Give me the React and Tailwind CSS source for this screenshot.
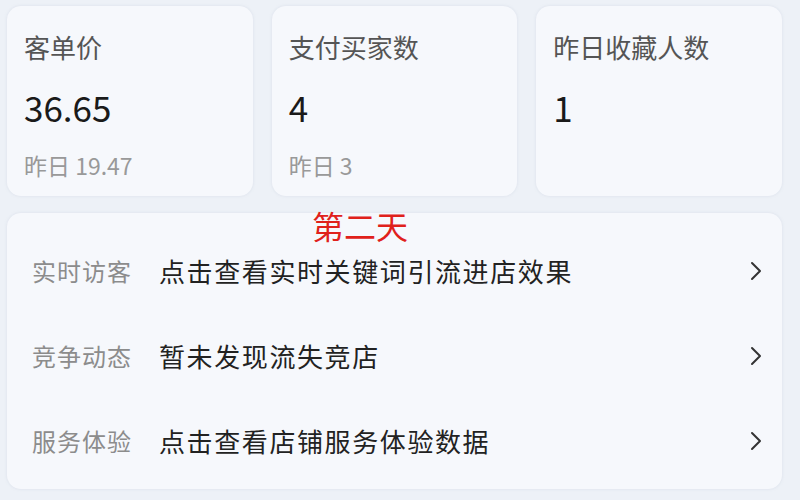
import React from 'react';

const stats = [
  { title: '客单价', value: '36.65', prev: '昨日 19.47' },
  { title: '支付买家数', value: '4', prev: '昨日 3' },
  { title: '昨日收藏人数', value: '1', prev: null },
];

const rows = [
  { label: '实时访客', text: '点击查看实时关键词引流进店效果' },
  { label: '竞争动态', text: '暂未发现流失竞店' },
  { label: '服务体验', text: '点击查看店铺服务体验数据' },
];

const Chevron = () => (
  <svg width="12" height="20" viewBox="0 0 12 20" fill="none" stroke="#333" strokeWidth="2" strokeLinecap="round" strokeLinejoin="round">
    <path d="M2 2l8 8-8 8" />
  </svg>
);

const App = () => {
  return (
    <div
      className="w-[800px] h-[500px] bg-[#edf1f7] overflow-hidden"
      style={{ fontFamily: '"Noto Sans CJK SC", "Noto Sans", sans-serif' }}
    >
      {/* stat cards */}
      <div className="flex gap-[19px] pl-[7px] pr-[18px] pt-[6px]">
        {stats.map((s) => (
          <div key={s.title} className="flex-1 h-[190px] rounded-[14px] bg-[#f6f8fc] shadow-[0_0_3px_rgba(180,190,210,0.35)] pl-[17px] pt-[26px]">
            <div className="text-[26px] leading-[30px] text-[#555]">{s.title}</div>
            <div className="mt-[25px] text-[35px] leading-[40px] text-[#1a1a1a]">{s.value}</div>
            {s.prev && <div className="mt-[23px] text-[23px] leading-[30px] text-[#999]">{s.prev}</div>}
          </div>
        ))}
      </div>

      {/* list card */}
      <div className="ml-[7px] mr-[18px] mt-[17px] h-[276px] rounded-[14px] bg-[#f6f8fc] shadow-[0_0_3px_rgba(180,190,210,0.35)] relative pt-[15px]">
        <div className="absolute left-[305px] top-[-6px] text-[32px] leading-[36px] text-[#e0211b]">第二天</div>
        {rows.map((r) => (
          <div key={r.label} className="flex items-center h-[85px] pl-[25px] pr-[20px]">
            <div className="w-[127px] text-[24px] tracking-[1px] text-[#8c8c8c]">{r.label}</div>
            <div className="flex-1 text-[26px] tracking-[1.6px] text-[#222]">{r.text}</div>
            <Chevron />
          </div>
        ))}
      </div>
    </div>
  );
};

export default App;
